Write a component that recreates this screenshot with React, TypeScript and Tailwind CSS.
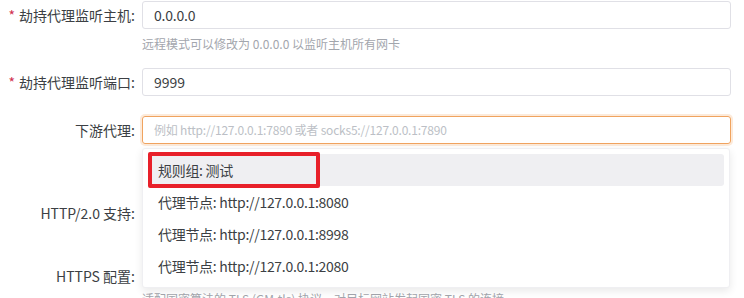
import React from "react";

const font = { fontFamily: '"Noto Sans CJK SC", "Noto Sans", sans-serif' };

const Label = ({ text, required }: { text: string; required?: boolean }) => (
  <div className="w-[142px] shrink-0 h-[28px] flex items-center justify-end pr-[7px] text-[14px] text-[#3c3f44]">
    {required && <span className="text-[#d03050] mr-[4px]">*</span>}
    {text}
  </div>
);

const options = [
  "规则组: 测试",
  "代理节点: http://127.0.0.1:8080",
  "代理节点: http://127.0.0.1:8998",
  "代理节点: http://127.0.0.1:2080",
];

export default function App() {
  return (
    <div style={font} className="relative w-[744px] h-[298px] overflow-hidden bg-white">
      <div className="flex flex-col pt-[1px] pr-[13px]">
        {/* 主机 */}
        <div className="flex">
          <Label text="劫持代理监听主机:" required />
          <div className="flex-1">
            <div className="h-[28px] rounded-[3px] border border-[#e0e0e6] flex items-center px-[11px] text-[14px] text-[#3c3f44] tracking-[-0.2px]">
              0.0.0.0
            </div>
            <div className="mt-[7px] h-[16px] leading-[16px] text-[12px] text-[#a3a6ad]">
              远程模式可以修改为 0.0.0.0 以监听主机所有网卡
            </div>
          </div>
        </div>

        {/* 端口 */}
        <div className="flex mt-[16px]">
          <Label text="劫持代理监听端口:" required />
          <div className="flex-1 h-[28px] rounded-[3px] border border-[#e0e0e6] flex items-center px-[11px] text-[14px] text-[#3c3f44]">
            9999
          </div>
        </div>

        {/* 下游代理 */}
        <div className="flex mt-[20px]">
          <Label text="下游代理:" />
          <div className="relative flex-1">
            <div className="h-[28px] rounded-[3px] border border-[#f0a35f] shadow-[0_0_0_2px_rgba(240,150,70,0.2)] flex items-center px-[11px] text-[12px] tracking-[-0.2px] text-[#bcbfc6]">
              例如 http://127.0.0.1:7890 或者 socks5://127.0.0.1:7890
            </div>

            <div className="absolute left-0 top-[32px] z-10 w-[588px] h-[140px] rounded-[3px] bg-white border border-[#efeff2] shadow-[0_3px_8px_rgba(0,0,0,0.09)] p-[5px]">
              {options.map((o, i) => (
                <div
                  key={o}
                  className={`h-[32px] flex items-center px-[10px] rounded-[3px] text-[14px] tracking-[-0.3px] text-[#3c3f44] ${i === 0 ? "bg-[#efeff2]" : ""}`}
                >
                  {o}
                </div>
              ))}
            </div>
            {/* 标注框 */}
            <div className="absolute left-[6px] top-[36px] z-20 w-[172px] h-[36px] rounded-[2px] border-[4px] border-[#e8202a]" />
          </div>
        </div>

        {/* HTTP/2.0 */}
        <div className="flex mt-[55px]">
          <Label text="HTTP/2.0 支持:" />
          <div className="flex-1 h-[28px]" />
        </div>

        {/* HTTPS */}
        <div className="flex mt-[35px]">
          <Label text="HTTPS 配置:" />
          <div className="flex-1">
            <div className="h-[28px]" />
            <div className="mt-[1px] h-[16px] leading-[16px] text-[12px] text-[#a3a6ad]">
              适配国密算法的 TLS (GM-tls) 协议，对目标网站发起国密 TLS 的连接
            </div>
          </div>
        </div>
      </div>
    </div>
  );
}
